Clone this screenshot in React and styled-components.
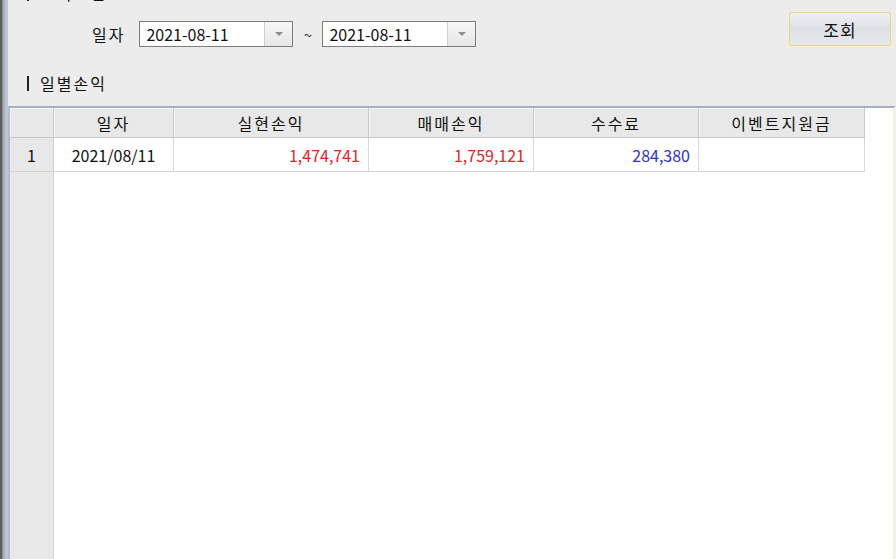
import React from 'react';
import styled, { createGlobalStyle } from 'styled-components';

const GlobalStyle = createGlobalStyle`
  html, body {
    margin: 0;
    padding: 0;
    height: 100%;
  }
  body {
    background: #ececec;
    font-family: "Noto Sans CJK KR", "Noto Sans", sans-serif;
    color: #111;
    overflow: hidden;
  }
  #root {
    height: 100%;
  }
`;

// Window shell
const Window = styled.div`
  display: flex;
  width: 896px;
  height: 559px;
`;

const FrameEdge = styled.div`
  width: 8px;
  flex-shrink: 0;
  background: linear-gradient(
    to right,
    #5e5e5e 0 2px,
    #8a8e97 2px 3px,
    #a7aebb 3px 5px,
    #bcc3d1 5px 8px
  );
`;

const Main = styled.div`
  flex: 1;
  display: flex;
  flex-direction: column;
  min-width: 0;
`;

// Search panel
const TopPanel = styled.div`
  height: 106px;
  flex-shrink: 0;
  display: flex;
  flex-direction: column;
  overflow: hidden;
`;

const SectionTitle = styled.div`
  display: flex;
  align-items: center;
  height: 20px;
  padding-left: 19px;
  margin-top: ${p => p.$offset || 0}px;
  font-size: 16px;
  line-height: 20px;
  letter-spacing: 2px;
`;

const TitleBar = styled.span`
  width: 2px;
  height: 15px;
  background: #222;
  margin-right: 11px;
`;

const FilterRow = styled.div`
  display: flex;
  align-items: flex-start;
  margin-top: 9px;
`;

const DateGroup = styled.div`
  display: flex;
  align-items: center;
  margin-top: 9px;
  padding-left: 84px;
`;

const FieldLabel = styled.span`
  font-size: 16px;
  letter-spacing: 2px;
  margin-right: 14px;
`;

const Tilde = styled.span`
  width: 29px;
  text-align: center;
  font-size: 15px;
  color: #333;
`;

const DateBox = styled.div`
  display: flex;
  width: 154px;
  height: 26px;
  box-sizing: border-box;
  border: 1px solid #7c7c7c;
  background: #fff;
`;

const DateText = styled.span`
  flex: 1;
  padding-left: 6px;
  font-size: 16px;
  line-height: 24px;
`;

const DropButton = styled.span`
  width: 27px;
  display: flex;
  align-items: center;
  justify-content: center;
  border-left: 1px solid #cfcfcf;
  background: linear-gradient(#f7f7f7, #e6e6e6);
`;

const DropArrow = styled.span`
  width: 0;
  height: 0;
  border-left: 4px solid transparent;
  border-right: 4px solid transparent;
  border-top: 4px solid #8e8e8e;
`;

const SearchButton = styled.button`
  margin-left: auto;
  margin-right: 5px;
  width: 102px;
  height: 34px;
  box-sizing: border-box;
  border: 1px solid #e2d596;
  border-radius: 2px;
  box-shadow: 0 0 0 1px #f6f0d2;
  background: linear-gradient(#eef0f3, #dde1e5 50%, #e7eaed);
  font-family: inherit;
  font-size: 17px;
  letter-spacing: 1px;
  color: #111;
  padding: 0;
`;

// Grid
const Grid = styled.div`
  flex: 1;
  display: flex;
  flex-direction: column;
  background: #fff;
  border-top: 2px solid #a8b0c0;
  border-left: 2px solid #b4bccb;
  border-right: 3px solid #f3f1e7;
`;

const Row = styled.div`
  display: flex;
  height: ${p => p.$h}px;
  flex-shrink: 0;
`;

const HeaderCell = styled.div`
  width: ${p => p.$w}px;
  box-sizing: border-box;
  display: flex;
  align-items: center;
  justify-content: center;
  background: #e8e8e8;
  border-right: 1px solid #cacaca;
  border-bottom: 1px solid #c8c8c8;
  box-shadow: inset 1px 1px 0 #f6f6f6;
  font-size: 16px;
  letter-spacing: 2px;
`;

const RowHead = styled.div`
  width: ${p => p.$w}px;
  box-sizing: border-box;
  display: flex;
  align-items: center;
  justify-content: center;
  background: #e8e8e8;
  border-right: 1px solid #cfcfcf;
  border-bottom: 1px solid #d2d2d2;
  font-size: 16px;
`;

const DataCell = styled.div`
  width: ${p => p.$w}px;
  box-sizing: border-box;
  display: flex;
  align-items: center;
  justify-content: ${p => (p.$align === 'right' ? 'flex-end' : 'center')};
  padding: 0 8px;
  border-right: 1px solid #d8d8d8;
  border-bottom: 1px solid #d8d8d8;
  color: ${p => p.$color || '#111'};
  font-size: 16px;
`;

const Filler = styled.div`
  flex: 1;
  display: flex;
`;

const FillerHead = styled.div`
  width: 44px;
  box-sizing: border-box;
  background: #e8e8e8;
  border-right: 1px solid #dadada;
`;

const RED = '#e5232b';
const BLUE = '#3030c8';

const columns = [
  { title: '일자', width: 120 },
  { title: '실현손익', width: 195 },
  { title: '매매손익', width: 165 },
  { title: '수수료', width: 165 },
  { title: '이벤트지원금', width: 166 },
];

const rows = [
  [
    { text: '2021/08/11' },
    { text: '1,474,741', align: 'right', color: RED },
    { text: '1,759,121', align: 'right', color: RED },
    { text: '284,380', align: 'right', color: BLUE },
    { text: '', align: 'right' },
  ],
];

const DateField = ({ value }) => (
  <DateBox>
    <DateText>{value}</DateText>
    <DropButton>
      <DropArrow />
    </DropButton>
  </DateBox>
);

const App = () => {
  return (
    <>
      <GlobalStyle />
      <Window>
        <FrameEdge />
        <Main>
          <TopPanel>
            <SectionTitle $offset={-17}>
              <TitleBar />
              조회조건
            </SectionTitle>

            <FilterRow>
              <DateGroup>
                <FieldLabel>일자</FieldLabel>
                <DateField value="2021-08-11" />
                <Tilde>~</Tilde>
                <DateField value="2021-08-11" />
              </DateGroup>
              <SearchButton>조회</SearchButton>
            </FilterRow>

            <SectionTitle $offset={26}>
              <TitleBar />
              일별손익
            </SectionTitle>
          </TopPanel>

          <Grid>
            <Row $h={30}>
              <HeaderCell $w={44} />
              {columns.map(col => (
                <HeaderCell key={col.title} $w={col.width}>
                  {col.title}
                </HeaderCell>
              ))}
            </Row>

            {rows.map((cells, i) => (
              <Row key={i} $h={34}>
                <RowHead $w={44}>{i + 1}</RowHead>
                {cells.map((cell, j) => (
                  <DataCell
                    key={j}
                    $w={columns[j].width}
                    $align={cell.align}
                    $color={cell.color}
                  >
                    {cell.text}
                  </DataCell>
                ))}
              </Row>
            ))}

            <Filler>
              <FillerHead />
            </Filler>
          </Grid>
        </Main>
      </Window>
    </>
  );
};

export default App;
